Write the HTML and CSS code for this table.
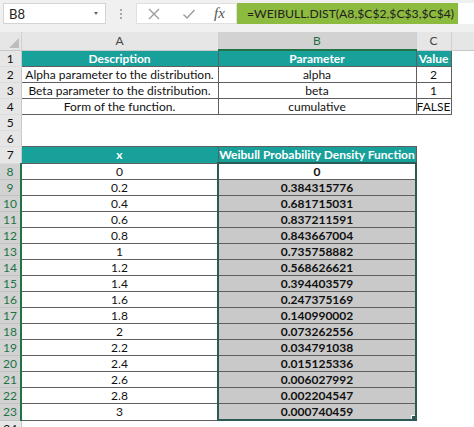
FILE: index.html
```html
<!DOCTYPE html>
<html>
<head>
<meta charset="utf-8">
<link rel="stylesheet" href="styles.css">
</head>
<body>
<div class="fbar">
  <div class="namebox"><span class="nb-text">B8</span><span class="nb-arrow"></span></div>
  <div class="dots"><i></i><i></i><i></i></div>
  <div class="btns">
    <svg class="ico" width="16" height="16" viewBox="0 0 16 16"><path d="M3 3 L13 13 M13 3 L3 13" stroke="#9a9a9a" stroke-width="1.3" fill="none"/></svg>
    <svg class="ico" width="16" height="16" viewBox="0 0 16 16"><path d="M2.5 8.5 L6 12 L13.5 4" stroke="#9a9a9a" stroke-width="1.3" fill="none"/></svg>
    <span class="fx">fx</span>
  </div>
  <div class="formula">=WEIBULL.DIST(A8,$C$2,$C$3,$C$4)</div>
  <div class="fend"></div>
</div>
<div class="gap"></div>
<table class="sheet">
  <colgroup><col class="c0"><col class="ca"><col class="cb"><col class="cc"><col class="cd"></colgroup>
  <tr class="colhead">
    <th class="corner"><svg width="12" height="12" viewBox="0 0 12 12"><path d="M11 1 L11 11 L1 11 Z" fill="#bdbdbd"/></svg></th>
    <th>A</th><th class="selcol">B</th><th>C</th><th class="last"></th>
  </tr>
  <tr><th class="rh">1</th><td class="hd bd">Description</td><td class="hd bd">Parameter</td><td class="hd bd">Value</td><td></td></tr>
  <tr><th class="rh">2</th><td class="bd">Alpha parameter to the distribution.</td><td class="bd">alpha</td><td class="bd">2</td><td></td></tr>
  <tr><th class="rh">3</th><td class="bd">Beta parameter to the distribution.</td><td class="bd">beta</td><td class="bd">1</td><td></td></tr>
  <tr><th class="rh">4</th><td class="bd">Form of the function.</td><td class="bd">cumulative</td><td class="bd">FALSE</td><td></td></tr>
  <tr><th class="rh">5</th><td></td><td></td><td></td><td></td></tr>
  <tr><th class="rh">6</th><td></td><td></td><td></td><td></td></tr>
  <tr><th class="rh">7</th><td class="hd bd">x</td><td class="hd bd hdb">Weibull Probability Density Function</td><td></td><td></td></tr>
  <tr><th class="rh sel">8</th><td class="bd">0</td><td class="bd val first">0</td><td></td><td></td></tr>
  <tr><th class="rh sel">9</th><td class="bd">0.2</td><td class="bd val g">0.384315776</td><td></td><td></td></tr>
  <tr><th class="rh sel">10</th><td class="bd">0.4</td><td class="bd val g">0.681715031</td><td></td><td></td></tr>
  <tr><th class="rh sel">11</th><td class="bd">0.6</td><td class="bd val g">0.837211591</td><td></td><td></td></tr>
  <tr><th class="rh sel">12</th><td class="bd">0.8</td><td class="bd val g">0.843667004</td><td></td><td></td></tr>
  <tr><th class="rh sel">13</th><td class="bd">1</td><td class="bd val g">0.735758882</td><td></td><td></td></tr>
  <tr><th class="rh sel">14</th><td class="bd">1.2</td><td class="bd val g">0.568626621</td><td></td><td></td></tr>
  <tr><th class="rh sel">15</th><td class="bd">1.4</td><td class="bd val g">0.394403579</td><td></td><td></td></tr>
  <tr><th class="rh sel">16</th><td class="bd">1.6</td><td class="bd val g">0.247375169</td><td></td><td></td></tr>
  <tr><th class="rh sel">17</th><td class="bd">1.8</td><td class="bd val g">0.140990002</td><td></td><td></td></tr>
  <tr><th class="rh sel">18</th><td class="bd">2</td><td class="bd val g">0.073262556</td><td></td><td></td></tr>
  <tr><th class="rh sel">19</th><td class="bd">2.2</td><td class="bd val g">0.034791038</td><td></td><td></td></tr>
  <tr><th class="rh sel">20</th><td class="bd">2.4</td><td class="bd val g">0.015125336</td><td></td><td></td></tr>
  <tr><th class="rh sel">21</th><td class="bd">2.6</td><td class="bd val g">0.006027992</td><td></td><td></td></tr>
  <tr><th class="rh sel">22</th><td class="bd">2.8</td><td class="bd val g">0.002204547</td><td></td><td></td></tr>
  <tr><th class="rh sel">23</th><td class="bd">3</td><td class="bd val g lastv">0.000740459<span class="handle"></span></td><td></td><td></td></tr>
  <tr><th class="rh">24</th><td></td><td></td><td></td><td></td></tr>
</table>
</body>
</html>
```

FILE: styles.css
```css
html, body { margin: 0; padding: 0; background: #fff; }
body { width: 474px; height: 427px; overflow: hidden; font-family: Lato, "Liberation Sans", sans-serif; }

.fbar { display: flex; align-items: stretch; height: 21px; padding: 3px 0 0 3px; background: #f0f0f0; }
.namebox { width: 103px; background: #fff; border: 1px solid #d4d4d4; box-sizing: border-box; display: flex; align-items: center; justify-content: space-between; padding: 0 6px 0 5px; }
.nb-text { font-size: 13px; color: #222; }
.nb-arrow { width: 0; height: 0; border-left: 2.5px solid transparent; border-right: 2.5px solid transparent; border-top: 3px solid #666; margin-right: 1px; }
.dots { width: 30px; display: flex; flex-direction: column; align-items: center; justify-content: center; gap: 2px; }
.dots i { display: block; width: 2px; height: 2px; background: #a8a8a8; }
.btns { width: 101px; background: #fff; box-sizing: border-box; border: 1px solid #e0e0e0; display: flex; align-items: center; padding-left: 9px; }
.btns .ico:first-child { margin-right: 19px; }
.btns .ico:nth-child(2) { margin-right: 17px; }
.fx { font-family: "Liberation Serif", serif; font-style: italic; font-size: 15px; color: #555; }
.formula { width: 221px; background: #8dbb3f; display: flex; align-items: center; padding-left: 10px; box-sizing: border-box; font-size: 12.2px; color: #222; white-space: nowrap; overflow: hidden; }
.fend { flex: 1; background: #fff; }
.gap { height: 8px; background: #f0f0f0; }

.sheet { border-collapse: collapse; table-layout: fixed; width: 474px; }
.c0 { width: 21px; } .ca { width: 197px; } .cb { width: 198px; } .cc { width: 35px; } .cd { width: 23px; }
.sheet td, .sheet th { padding: 0; height: 15px; line-height: 15px; font-size: 12px; text-align: center; white-space: nowrap; overflow: hidden; color: #111; }
.colhead th { background: #e6e6e6; font-weight: normal; color: #444; font-size: 12px; border-right: 1px solid #d0d0d0; border-bottom: 1px solid #c8c8c8; height: 16px; line-height: 17px; }
.colhead th.selcol { background: #d2d2d2; color: #1e6e43; border-bottom: 2px solid #217346; height: 15px; }
.colhead th.last { border-right: none; }
.corner { text-align: right; vertical-align: bottom; }
.corner svg { display: block; margin: 0 1px 1px auto; }
.rh { background: #e6e6e6; font-weight: normal; color: #444; border-bottom: 1px solid #dcdcdc; border-right: 1px solid #c8c8c8; }
.rh.sel { background: #d2d2d2; color: #217346; border-right: 2px solid #217346; border-bottom: 1px solid #c4c4c4; }
.bd { border: 1px solid #5f5f5f; }
.hd { background: #18a09a; color: #fff !important; font-weight: bold; }
.val { font-weight: bold; border-left: 2px solid #2b5a54; border-right: 2px solid #2b5a54; }
.g { background: #c9c9c9; }
.first { border-top: 2px solid #2b5a54; height: 14px; }
.lastv { border-bottom: 2px solid #2b5a54; position: relative; height: 14px; }
.handle { position: absolute; right: -3px; bottom: -3px; width: 5px; height: 5px; background: #2b5a54; border: 1px solid #fff; }
```
